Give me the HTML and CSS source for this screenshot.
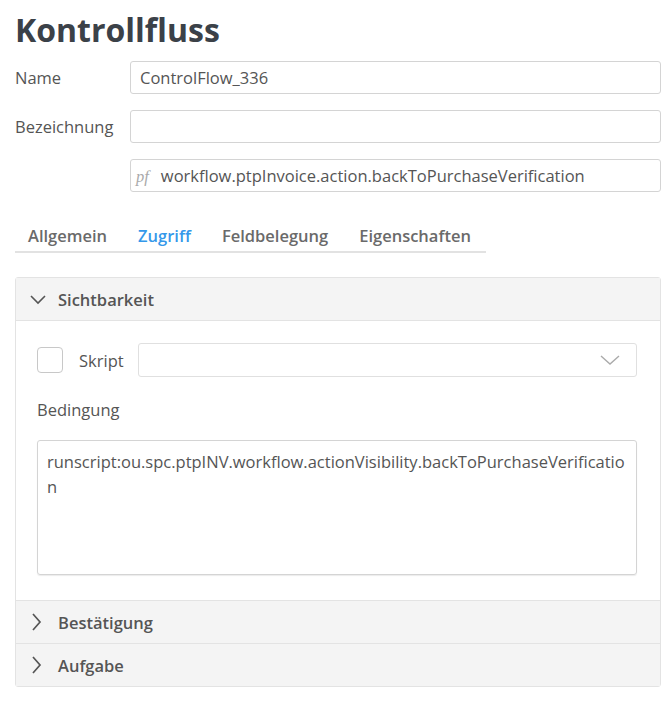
FILE: index.html
```html
<html lang="de">
<head>
  <meta charset="utf-8">
  <title>Kontrollfluss</title>
  <link rel="stylesheet" href="styles.css">
</head>
<body>
  <main class="editor">
    <h1 class="title">Kontrollfluss</h1>

    <div class="form-row">
      <label class="form-label">Name</label>
      <div class="field">ControlFlow_336</div>
    </div>
    <div class="form-row">
      <label class="form-label">Bezeichnung</label>
      <div class="field"></div>
    </div>
    <div class="form-row">
      <label class="form-label"></label>
      <div class="field"><span class="pf">pf</span>workflow.ptpInvoice.action.backToPurchaseVerification</div>
    </div>

    <nav class="tabs">
      <a class="tab">Allgemein</a>
      <a class="tab active">Zugriff</a>
      <a class="tab">Feldbelegung</a>
      <a class="tab">Eigenschaften</a>
    </nav>

    <section class="accordion">
      <div class="acc-head">
        <svg class="chev" width="18" height="16" viewBox="0 0 18 16"><path d="M2 5l7 7 7-7" fill="none" stroke="#555" stroke-width="1.6"/></svg>
        <span>Sichtbarkeit</span>
      </div>
      <div class="acc-body">
        <div class="script-row">
          <span class="checkbox"></span>
          <span class="script-label">Skript</span>
          <div class="select">
            <svg width="20" height="12" viewBox="0 0 20 12"><path d="M1 2l9 8 9-8" fill="none" stroke="#aaa" stroke-width="1.4"/></svg>
          </div>
        </div>
        <div class="sub-label">Bedingung</div>
        <div class="textarea">runscript:ou.spc.ptpINV.workflow.actionVisibility.backToPurchaseVerification</div>
      </div>
      <div class="acc-head closed">
        <svg class="chev" width="18" height="20" viewBox="0 0 18 20"><path d="M4 2l7 8-7 8" fill="none" stroke="#555" stroke-width="1.7"/></svg>
        <span>Bestätigung</span>
      </div>
      <div class="acc-head closed">
        <svg class="chev" width="18" height="20" viewBox="0 0 18 20"><path d="M4 2l7 8-7 8" fill="none" stroke="#555" stroke-width="1.7"/></svg>
        <span>Aufgabe</span>
      </div>
    </section>
  </main>
</body>
</html>
```

FILE: styles.css
```css
body {
  margin: 0;
  background: #fff;
  font-family: "Open Sans", sans-serif;
  font-size: 16.5px;
  color: #555;
}

.editor {
  padding: 12px 11px 0 15px;
}

.title {
  margin: 0 0 13px;
  font-size: 32px;
  font-weight: 700;
  color: #3b4148;
  line-height: 36px;
}

.form-row {
  display: flex;
  align-items: center;
  margin-bottom: 16px;
}

.form-label {
  width: 115px;
  flex: none;
  color: #555;
}

.field {
  flex: 1;
  height: 33px;
  box-sizing: border-box;
  border: 1px solid #d4d4d4;
  border-radius: 3px;
  padding: 0 9px;
  line-height: 31px;
  color: #555;
  white-space: nowrap;
  overflow: hidden;
}

.pf {
  font-style: italic;
  color: #aaa;
  margin: 0 12px 0 -4px;
  font-family: "Liberation Serif", serif;
}

.tabs {
  display: flex;
  gap: 31px;
  width: 458px;
  margin-top: 32px;
  padding: 0 0 4px 13px;
  border-bottom: 2px solid #e2e2e2;
}

.tab {
  font-weight: 600;
  color: #6a6a6a;
}

.tab.active {
  color: #3498ea;
}

.accordion {
  margin-top: 24px;
  border: 1px solid #e3e3e3;
  border-radius: 3px;
}

.acc-head {
  display: flex;
  align-items: center;
  height: 42px;
  padding: 0 13px;
  background: #f4f4f4;
  font-weight: 600;
  color: #555;
  border-bottom: 1px solid #e3e3e3;
}

.acc-head:last-child {
  border-bottom: none;
}

.chev {
  margin-right: 11px;
}

.acc-body {
  padding: 22px 23px 25px 21px;
  border-bottom: 1px solid #e3e3e3;
}

.script-row {
  display: flex;
  align-items: center;
}

.checkbox {
  width: 26px;
  height: 26px;
  box-sizing: border-box;
  border: 1px solid #c8c8c8;
  border-radius: 4px;
}

.script-label {
  margin: 0 14px 0 16px;
}

.select {
  flex: 1;
  height: 34px;
  box-sizing: border-box;
  border: 1px solid #e0e0e0;
  border-radius: 3px;
  display: flex;
  align-items: center;
  justify-content: flex-end;
  padding-right: 16px;
}

.sub-label {
  margin: 21px 0 19px;
}

.textarea {
  height: 135px;
  box-sizing: border-box;
  border: 1px solid #d4d4d4;
  border-radius: 3px;
  padding: 8px 9px;
  line-height: 25px;
  word-break: break-all;
  box-shadow: 0 1px 1px rgba(0,0,0,0.08);
}
```
